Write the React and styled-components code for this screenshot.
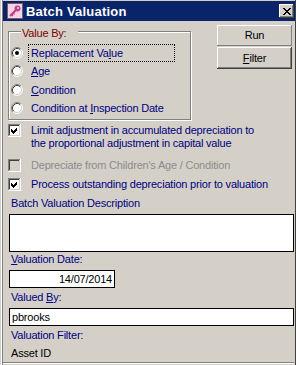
import React from "react";
import styled, { createGlobalStyle } from "styled-components";

const GlobalStyle = createGlobalStyle`
  html, body {
    margin: 0;
    padding: 0;
    background: #d4d0c8;
  }
`;

const Window = styled.div`
  width: 296px;
  height: 365px;
  overflow: hidden;
  background: #d4d0c8;
  box-sizing: border-box;
  font-family: "Liberation Sans", Arial, sans-serif;
  font-size: 11px;
  line-height: 13px;
  letter-spacing: -0.2px;
  box-shadow: inset 1px 0 0 #d4d0c8, inset 2px 0 0 #ffffff, inset 3px 0 0 #808080,
    inset -1px 0 0 #404040;
`;

const TitleBar = styled.div`
  display: flex;
  align-items: center;
  height: 20px;
  margin: 1px 1px 0 3px;
  padding-left: 4px;
  background: #0a246a;
  color: #fff;
`;

const TitleIcon = styled.svg`
  flex: none;
  display: block;
`;

const TitleText = styled.span`
  flex: 1;
  margin-left: 3px;
  font-weight: bold;
  font-size: 13px;
  letter-spacing: 0.2px;
  white-space: nowrap;
`;

const CloseButton = styled.div`
  flex: none;
  margin-right: 1px;
  width: 15px;
  height: 14px;
  box-sizing: border-box;
  background: #d4d0c8;
  display: flex;
  align-items: center;
  justify-content: center;
  box-shadow: inset -1px -1px 0 #404040, inset 1px 1px 0 #ffffff,
    inset -2px -2px 0 #808080;
`;

const Content = styled.div`
  padding: 0 4px 0 8px;
`;

const TopRow = styled.div`
  display: flex;
  justify-content: space-between;
  align-items: flex-start;
`;

const GroupBox = styled.div`
  position: relative;
  margin-top: 10px;
  width: 183px;
  height: 89px;
  box-sizing: border-box;
  border: 1px solid #808080;
  box-shadow: 1px 1px 0 #ffffff, inset 1px 1px 0 #ffffff;
  padding: 11px 0 0 2px;
`;

const Legend = styled.span`
  position: absolute;
  top: -5px;
  left: 12px;
  width: 56px;
  padding-left: 1px;
  background: #d4d0c8;
  color: #800000;
`;

const RadioList = styled.div`
  display: grid;
  grid-template-rows: 19px 18px 19px 18px;
`;

const RadioRow = styled.div`
  display: flex;
  align-items: center;
  color: #000080;
`;

const RadioLabel = styled.span`
  margin-left: 5px;
  padding: 0 2px;
  height: 18px;
  line-height: 16px;
  box-sizing: border-box;
  border: 1px dotted ${(p) => (p.focused ? "#000" : "transparent")};
  width: ${(p) => (p.focused ? "147px" : "auto")};
`;

const ButtonColumn = styled.div`
  margin-top: 4px;
  display: flex;
  flex-direction: column;
  width: 75px;
`;

const PushButton = styled.div`
  height: ${(p) => p.h}px;
  display: flex;
  align-items: center;
  justify-content: center;
  color: #000;
  background: #d4d0c8;
  box-shadow: ${(p) =>
    p.raised
      ? "inset -1px -1px 0 #404040, inset 1px 1px 0 #ffffff, inset -2px -2px 0 #808080"
      : "inset -1px -1px 0 #808080, inset 1px 1px 0 #ffffff"};
  margin-top: ${(p) => p.mt || 0}px;
`;

const CheckRow = styled.div`
  display: flex;
  align-items: flex-start;
  margin-top: ${(p) => p.mt}px;
  color: ${(p) => (p.disabled ? "#8c8c8c" : "#000080")};
`;

const CheckText = styled.span`
  margin-left: 10px;
`;

const FieldLabel = styled.div`
  margin-top: ${(p) => p.mt}px;
  padding-left: 3px;
  color: ${(p) => p.color || "#000080"};
`;

const EditBox = styled.div`
  margin-top: 4px;
  margin-left: 1px;
  width: ${(p) => p.w}px;
  height: ${(p) => p.h}px;
  box-sizing: border-box;
  background: #fff;
  border: 1px solid #000;
  color: #000;
  padding: 0 2px;
  line-height: 16px;
  text-align: ${(p) => p.align || "left"};
`;

const Separator = styled.div`
  margin: 2px 0 0 -5px;
  width: 291px;
  height: 1px;
  background: #808080;
  box-shadow: 0 1px 0 #ffffff;
`;

const Key = styled.u`
  text-decoration: underline;
`;

// pink key on a light square, like the app icon
const KeyIcon = () => (
  <TitleIcon width="16" height="16" viewBox="0 0 16 16">
    <rect x="0.5" y="0.5" width="15" height="15" fill="#f4d4e4" stroke="#7a5a70" />
    <circle cx="10.5" cy="5.5" r="3" fill="#c0408a" />
    <circle cx="11" cy="5" r="1" fill="#f4d4e4" />
    <path d="M9 7 L3 13" stroke="#c0408a" strokeWidth="2.2" />
    <path d="M4.5 11.5 L6 13 M6 10 L7.5 11.5" stroke="#c0408a" strokeWidth="1.4" />
  </TitleIcon>
);

// 8x7 pixel X, drawn row by row
const xRows = [
  [0, 1, 6, 7],
  [1, 2, 5, 6],
  [2, 3, 4, 5],
  [3, 4],
  [2, 3, 4, 5],
  [1, 2, 5, 6],
  [0, 1, 6, 7],
];

const CloseGlyph = () => (
  <svg width="8" height="7" viewBox="0 0 8 7" shapeRendering="crispEdges" style={{ display: "block" }}>
    {xRows.map((cols, y) =>
      cols.map((x) => <rect key={`${x}-${y}`} x={x} y={y} width="1" height="1" fill="#000" />)
    )}
  </svg>
);

const Radio = ({ checked }) => (
  <svg width="12" height="12" viewBox="0 0 12 12" style={{ flex: "none" }}>
    <circle cx="6" cy="6" r="5" fill="#fff" />
    <path d="M2.11 9.89 A5.5 5.5 0 0 1 9.89 2.11" stroke="#808080" fill="none" />
    <path d="M9.89 2.11 A5.5 5.5 0 0 1 2.11 9.89" stroke="#ffffff" fill="none" />
    <path d="M2.82 9.18 A4.5 4.5 0 0 1 9.18 2.82" stroke="#404040" fill="none" />
    <path d="M9.18 2.82 A4.5 4.5 0 0 1 2.82 9.18" stroke="#d4d0c8" fill="none" />
    {checked && <circle cx="6" cy="6" r="2" fill="#000" />}
  </svg>
);

const CheckBox = ({ checked, disabled }) => (
  <svg width="13" height="13" viewBox="0 0 13 13" shapeRendering="crispEdges" style={{ flex: "none" }}>
    <rect x="0" y="0" width="13" height="13" fill="#fff" />
    <rect x="0" y="0" width="12" height="12" fill="#808080" />
    <rect x="1" y="1" width="11" height="11" fill="#d4d0c8" />
    <rect x="1" y="1" width="10" height="10" fill="#404040" />
    <rect x="2" y="2" width="9" height="9" fill={disabled ? "#d4d0c8" : "#fff"} />
    {checked && <path d="M3 5 L5 7 L9 3 L9 6 L5 10 L3 8 Z" fill="#000" />}
  </svg>
);

const radios = [
  { label: <>Replacement Va<Key>l</Key>ue</>, checked: true },
  { label: <><Key>A</Key>ge</> },
  { label: <><Key>C</Key>ondition</> },
  { label: <>Condition at <Key>I</Key>nspection Date</> },
];

export default function App() {
  return (
    <>
      <GlobalStyle />
      <Window>
        <TitleBar>
          <KeyIcon />
          <TitleText>Batch Valuation</TitleText>
          <CloseButton>
            <CloseGlyph />
          </CloseButton>
        </TitleBar>
        <Content>
          <TopRow>
            <GroupBox>
              <Legend>Value By:</Legend>
              <RadioList>
                {radios.map((r, i) => (
                  <RadioRow key={i}>
                    <Radio checked={r.checked} />
                    <RadioLabel focused={r.checked}>{r.label}</RadioLabel>
                  </RadioRow>
                ))}
              </RadioList>
            </GroupBox>
            <ButtonColumn>
              <PushButton h={21}>Run</PushButton>
              <PushButton h={22} mt={1} raised>
                <Key>F</Key>ilter
              </PushButton>
            </ButtonColumn>
          </TopRow>

          <CheckRow mt={4}>
            <CheckBox checked />
            <CheckText>
              Limit adjustment in accumulated depreciation to
              <br />
              the proportional adjustment in capital value
            </CheckText>
          </CheckRow>
          <CheckRow mt={9} disabled>
            <CheckBox disabled />
            <CheckText>Depreciate from Children's Age / Condition</CheckText>
          </CheckRow>
          <CheckRow mt={6}>
            <CheckBox checked />
            <CheckText>Process outstanding depreciation prior to valuation</CheckText>
          </CheckRow>

          <FieldLabel mt={6}>Batch Valuation Description</FieldLabel>
          <EditBox w={285} h={38} />
          <FieldLabel mt={1}>
            <Key>V</Key>aluation Date:
          </FieldLabel>
          <EditBox w={106} h={18} align="right">
            14/07/2014
          </EditBox>
          <FieldLabel mt={3}>
            Valued <Key>B</Key>y:
          </FieldLabel>
          <EditBox w={285} h={18}>
            pbrooks
          </EditBox>
          <FieldLabel mt={3}>Valuation Filter:</FieldLabel>
          <FieldLabel mt={5} color="#000">
            Asset ID
          </FieldLabel>
          <Separator />
        </Content>
      </Window>
    </>
  );
}
